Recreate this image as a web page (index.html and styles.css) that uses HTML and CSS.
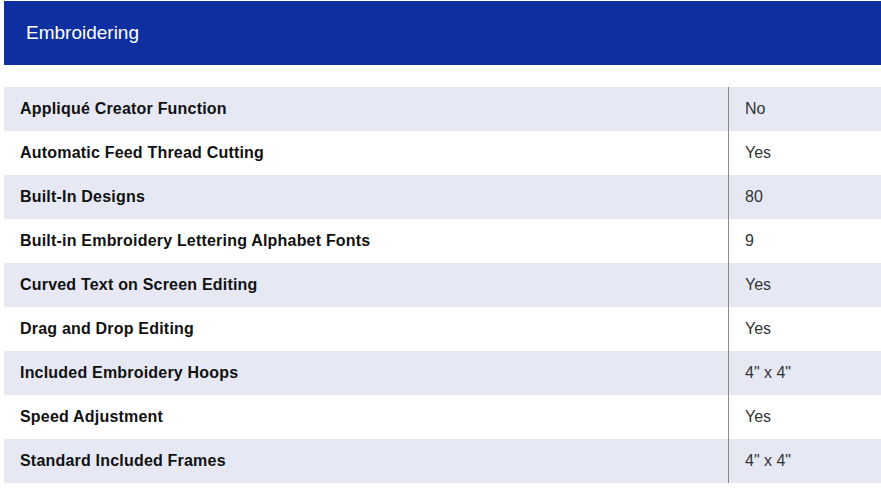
FILE: index.html
```html
<!DOCTYPE html>
<html>
<head>
<meta charset="utf-8">
<link rel="stylesheet" href="styles.css">
</head>
<body>
<div class="panel">
  <div class="header">Embroidering</div>
  <div class="specs">
    <div class="row"><div class="label">Appliqué Creator Function</div><div class="value">No</div></div>
    <div class="row"><div class="label">Automatic Feed Thread Cutting</div><div class="value">Yes</div></div>
    <div class="row"><div class="label">Built-In Designs</div><div class="value">80</div></div>
    <div class="row"><div class="label">Built-in Embroidery Lettering Alphabet Fonts</div><div class="value">9</div></div>
    <div class="row"><div class="label">Curved Text on Screen Editing</div><div class="value">Yes</div></div>
    <div class="row"><div class="label">Drag and Drop Editing</div><div class="value">Yes</div></div>
    <div class="row"><div class="label">Included Embroidery Hoops</div><div class="value">4" x 4"</div></div>
    <div class="row"><div class="label">Speed Adjustment</div><div class="value">Yes</div></div>
    <div class="row"><div class="label">Standard Included Frames</div><div class="value">4" x 4"</div></div>
  </div>
</div>
</body>
</html>
```
FILE: styles.css
```css
html, body {
  margin: 0;
  padding: 0;
  background: #ffffff;
}
body {
  padding: 1px 0 0 4px;
  font-family: "Liberation Sans", Arial, sans-serif;
}
.header {
  height: 64px;
  background: #0d2fa0;
  color: #ffffff;
  font-size: 19px;
  line-height: 64px;
  padding-left: 22px;
}
.specs {
  margin-top: 22px;
  display: flex;
  flex-direction: column;
}
.row {
  display: grid;
  grid-template-columns: 724px 1fr;
  height: 44px;
}
.row:nth-child(odd) {
  background: #e6e9f4;
}
.label {
  padding-left: 16px;
  font-size: 16px;
  font-weight: bold;
  letter-spacing: 0.2px;
  color: #111111;
  line-height: 44px;
}
.value {
  border-left: 1px solid #8a8a8a;
  padding-left: 16px;
  font-size: 16px;
  color: #333333;
  line-height: 44px;
}
```
